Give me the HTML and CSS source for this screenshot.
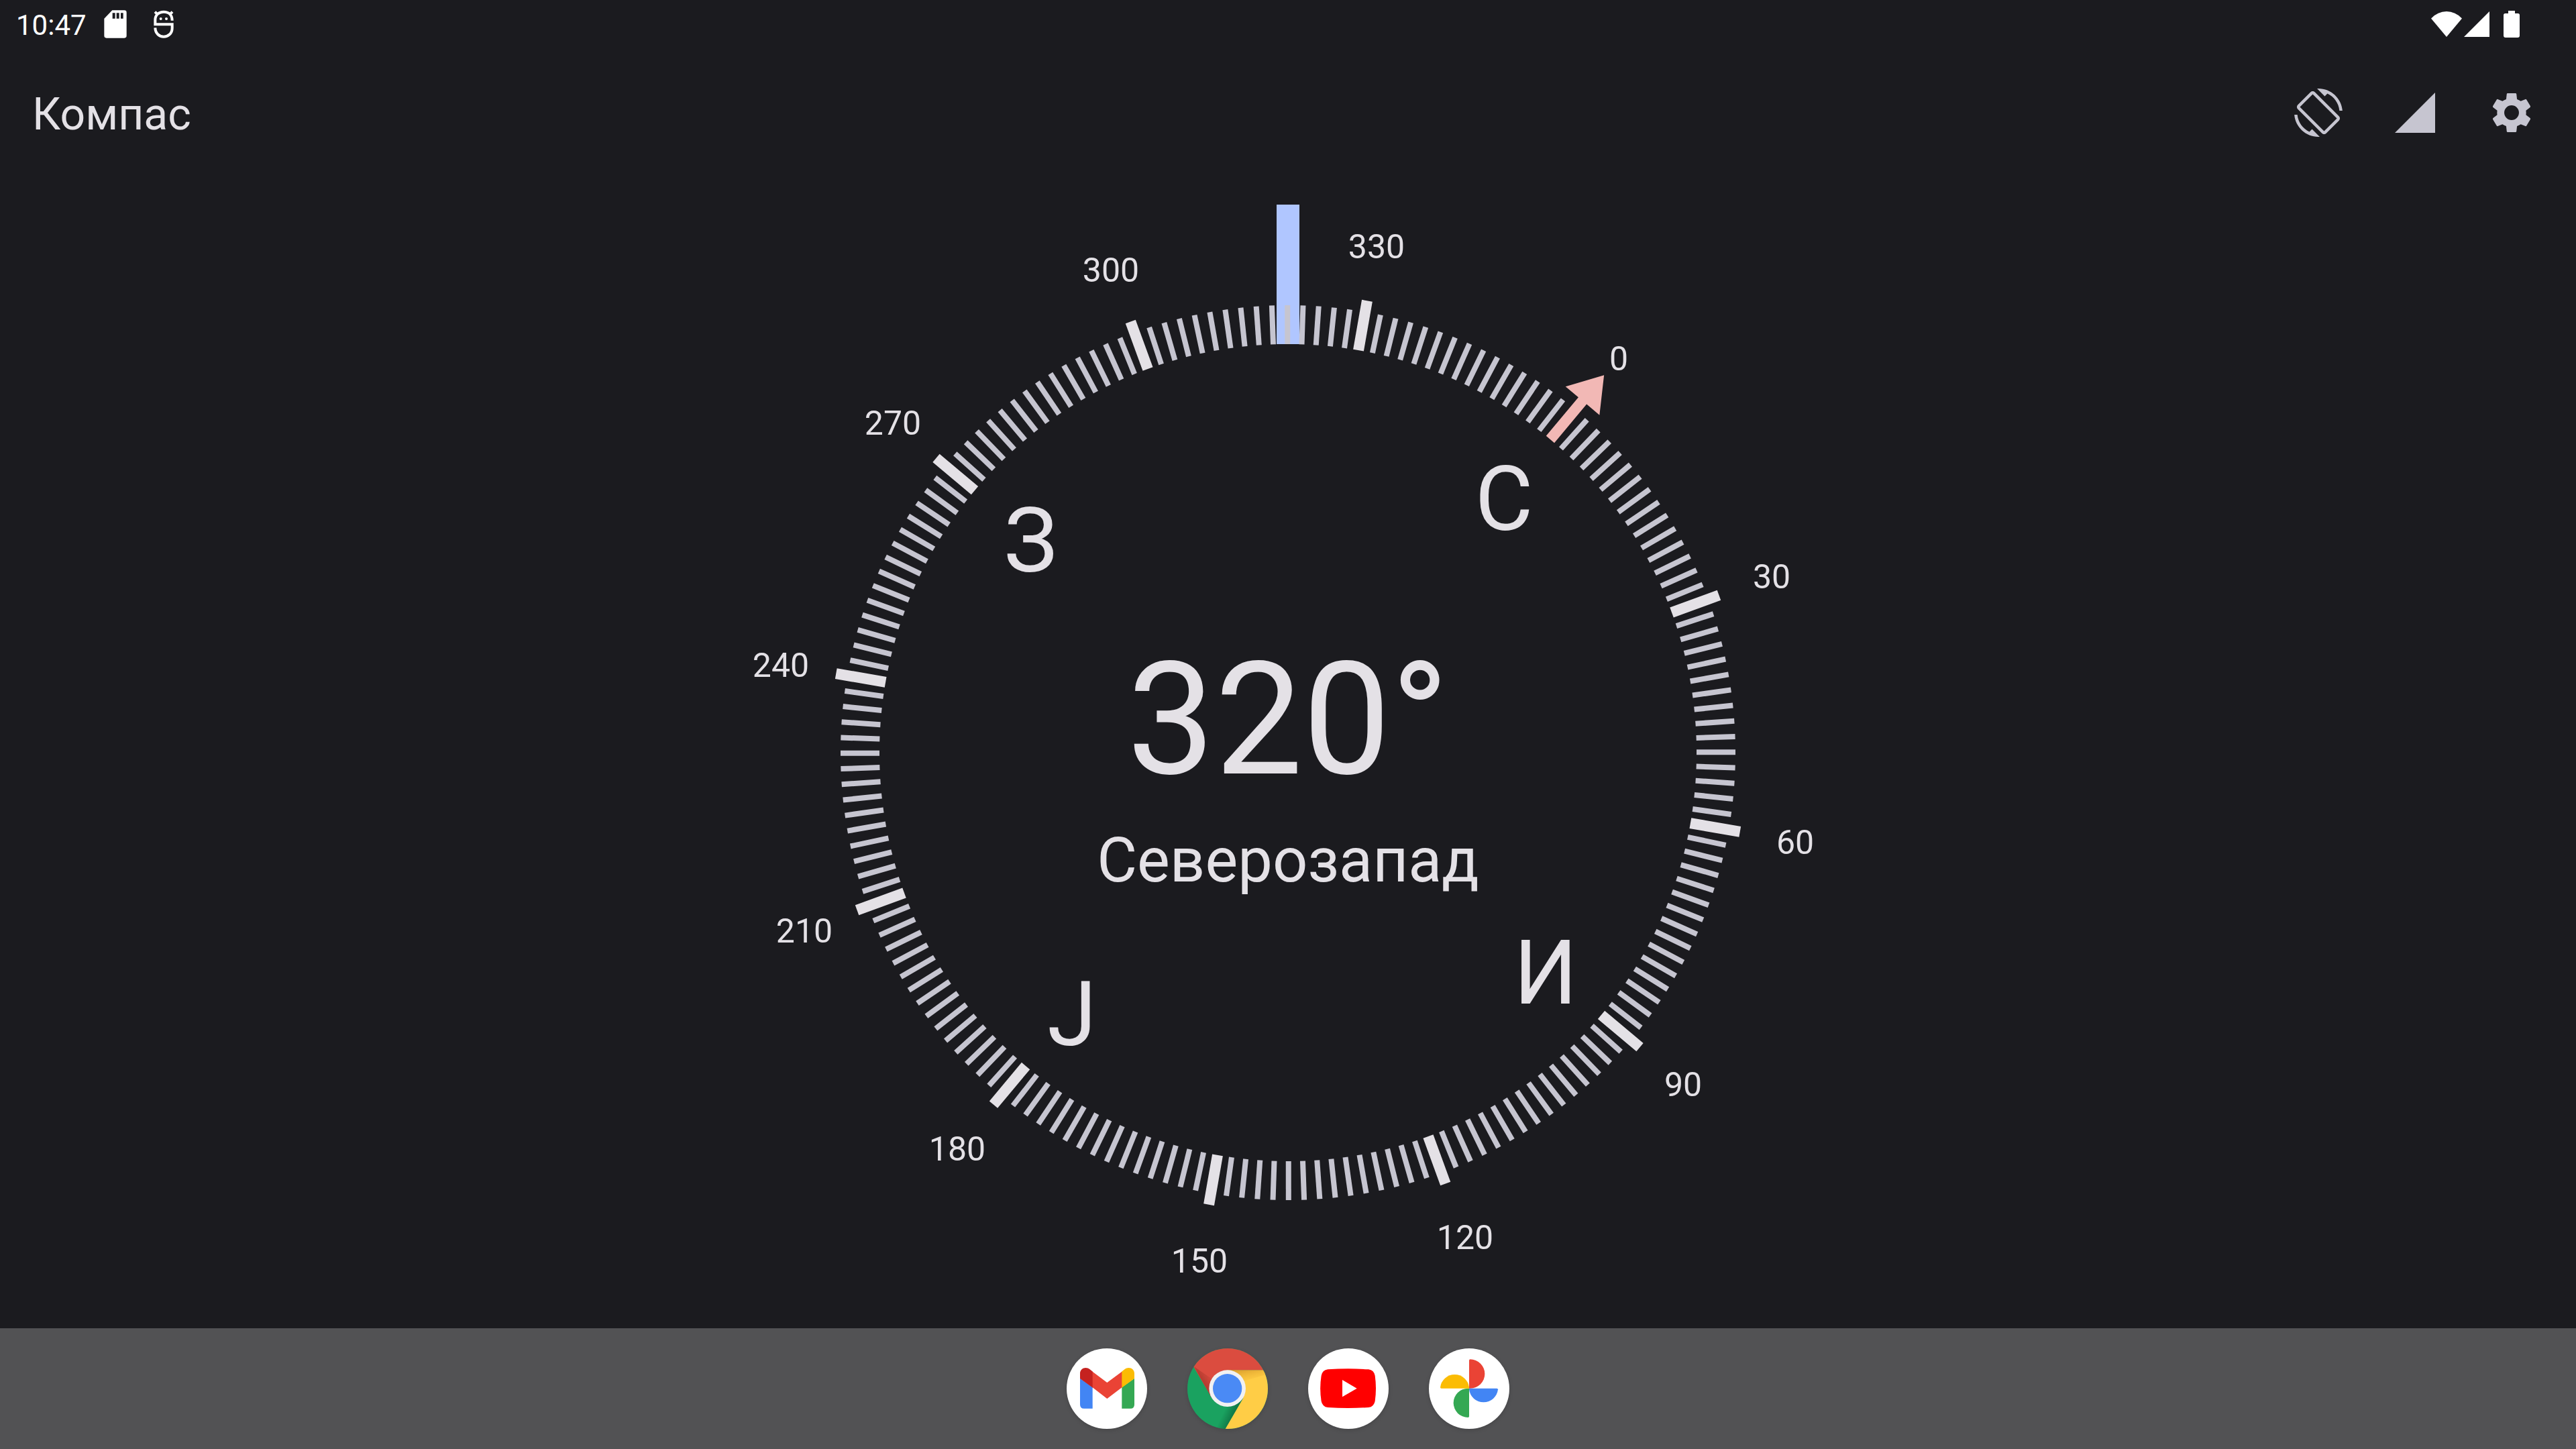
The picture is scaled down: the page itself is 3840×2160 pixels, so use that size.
FILE: index.html
```html
<!DOCTYPE html>
<html lang="sr">
<head>
<meta charset="utf-8">
<meta name="viewport" content="width=device-width, initial-scale=1">
<title>Компас</title>
<link rel="stylesheet" href="styles.css">
</head>
<body>
<div class="screen">
  <div class="status-bar">
    <div class="status-left">
      <time class="clock">10:47</time>
      <div class="notifications">
        <svg class="icon-sd" viewBox="46 27 102 126" aria-hidden="true">
          <path fill="currentColor" fill-rule="evenodd" d="M83 28H137Q147 28 147 38V142Q147 152 137 152H57Q47 152 47 142V65ZM84 40V65H96V40ZM102 40V65H114V40ZM121 40V65H132V40Z"/>
        </svg>
        <svg class="icon-debug" viewBox="267 27 90 126" aria-hidden="true">
          <g fill="none" stroke="currentColor" stroke-width="12">
            <path d="M350 74C350 46 333 35 312 35S274 48 274 72V91H350V108C350 132 332 146 312 146S275 132 274 106"/>
            <path d="M273 35L284 46M351 35L340 46"/>
          </g>
          <g fill="currentColor"><circle cx="299" cy="66" r="6"/><circle cx="324" cy="66" r="6"/></g>
        </svg>
      </div>
    </div>
    <div class="status-right">
      <div class="radios">
        <svg class="icon-wifi" viewBox="0 0 46 38" aria-hidden="true"><path fill="currentColor" d="M23 38L0 10.500Q10 0 23 0T46 10.500Z"/></svg>
        <svg class="icon-cell" viewBox="0 0 38 38" aria-hidden="true"><path fill="currentColor" d="M0 38L38 0V38Z"/></svg>
      </div>
      <svg class="icon-battery" viewBox="0 0 24 40" aria-hidden="true"><path fill="currentColor" d="M7 0H17V4H21.500Q24 4 24 6.500V37Q24 40 21 40H3Q0 40 0 37V6.500Q0 4 2.500 4H7Z"/></svg>
    </div>
  </div>

  <header class="app-bar">
    <h1 class="title">Компас</h1>
    <div class="actions">
      <button class="action" type="button" aria-label="Ротација екрана">
        <svg viewBox="0 0 24 24" aria-hidden="true"><path fill="currentColor" d="M16.480 2.520c3.270 1.550 5.610 4.720 5.970 8.480h1.500C23.440 4.840 18.290 0 12 0l-.66.03 3.810 3.810 1.330-1.320zm-6.250-.77c-.59-.59-1.540-.59-2.120 0L1.750 8.110c-.59.59-.59 1.540 0 2.120l12.020 12.020c.59.59 1.540.59 2.120 0l6.360-6.360c.59-.59.59-1.540 0-2.120L10.230 1.750zm4.600 19.440L2.810 9.170l6.360-6.360 12.020 12.020-6.360 6.360zm-7.310.29C4.250 19.940 1.910 16.760 1.550 13H.05C.56 19.160 5.710 24 12 24l.66-.03-3.810-3.810-1.330 1.320z"/></svg>
      </button>
      <button class="action" type="button" aria-label="Тачност сензора">
        <svg viewBox="0 0 24 24" aria-hidden="true"><path fill="currentColor" d="M2 22h20V2z"/></svg>
      </button>
      <button class="action" type="button" aria-label="Подешавања">
        <svg viewBox="0 0 24 24" aria-hidden="true"><path fill="currentColor" fill-rule="evenodd" d="M10.030 2.330H13.970Q14.350 2.330 14.400 2.700L14.700 5.300Q15.700 5.700 16.550 6.250L18.850 5.300Q19.200 5.200 19.400 5.500L21.300 8.700Q21.450 9.050 21.200 9.300L19.150 10.900Q19.300 12 19.150 13.100L21.200 14.700Q21.450 14.950 21.300 15.300L19.400 18.500Q19.200 18.800 18.850 18.700L16.550 17.750Q15.700 18.300 14.700 18.700L14.400 21.300Q14.350 21.670 13.970 21.670H10.030Q9.650 21.670 9.600 21.300L9.300 18.700Q8.300 18.300 7.450 17.750L5.150 18.700Q4.800 18.800 4.600 18.500L2.700 15.300Q2.550 14.950 2.800 14.700L4.850 13.100Q4.700 12 4.850 10.900L2.800 9.300Q2.550 9.050 2.700 8.700L4.600 5.500Q4.800 5.200 5.150 5.300L7.450 6.250Q8.300 5.700 9.300 5.300L9.600 2.700Q9.650 2.330 10.030 2.330ZM12 8.350A3.650 3.650 0 1 0 12 15.650A3.650 3.650 0 1 0 12 8.350Z"/></svg>
      </button>
    </div>
  </header>

  <main class="compass">
    <svg class="dial" viewBox="-858 -858 1716 1716" role="img" aria-label="320° Северозапад" data-rotation="39.93">
      <rect class="pointer" x="-17" y="-817" width="34" height="208"/>
      <g class="ticks"></g>
      <g class="degrees"></g>
      <g class="cardinals"></g>
      <text class="heading" x="0" y="31">320°</text>
      <text class="direction" x="0" y="192">Северозапад</text>
    </svg>
  </main>

  <nav class="taskbar" aria-label="Апликације">
    <a class="app" href="#gmail" aria-label="Gmail">
      <svg viewBox="0 0 360 360" aria-hidden="true">
        <circle cx="180" cy="180" r="180" fill="#fff"/>
        <path fill="#4285f4" d="M60 134L116 174V269H78Q60 269 60 251Z"/>
        <path fill="#34a853" d="M303 134L247 174V269H285Q303 269 303 251Z"/>
        <path fill="#c5221f" d="M60 135V113C60 89 86 80 104 94L117 104V176Z"/>
        <path fill="#fbbc04" d="M303 135V113C303 89 277 80 259 94L246 104V176Z"/>
        <path fill="#ea4335" d="M116 104L181 153L247 104V175L181 225L116 175Z"/>
      </svg>
    </a>
    <a class="app" href="#chrome" aria-label="Chrome">
      <svg viewBox="0 0 360 360" aria-hidden="true">
        <defs>
          <clipPath id="chrome-disc"><circle cx="180" cy="180" r="180"/></clipPath>
          <linearGradient id="red-shade" gradientUnits="userSpaceOnUse" x1="62" y1="148" x2="108" y2="118"><stop offset="0" stop-color="#8f2a20" stop-opacity=".55"/><stop offset="1" stop-color="#8f2a20" stop-opacity="0"/></linearGradient>
          <linearGradient id="yellow-shade" gradientUnits="userSpaceOnUse" x1="250" y1="97" x2="264" y2="160"><stop offset="0" stop-color="#b06a10" stop-opacity=".4"/><stop offset="1" stop-color="#e8a020" stop-opacity="0"/></linearGradient>
          <linearGradient id="green-shade" gradientUnits="userSpaceOnUse" x1="210" y1="292" x2="168" y2="272"><stop offset="0" stop-color="#0a5a34" stop-opacity=".6"/><stop offset="1" stop-color="#0a5a34" stop-opacity="0"/></linearGradient>
        </defs>
        <g clip-path="url(#chrome-disc)">
          <path fill="#1aa260" d="M0 0H360V360H0Z"/>
          <path fill="url(#green-shade)" d="M108 220L248 225L170 360H120Z"/>
          <path fill="#ffcd46" d="M180 97H360V360H170L250 222Z"/>
          <path fill="url(#yellow-shade)" d="M180 97H345L350 118L240 150Z"/>
          <path fill="#db4c3f" d="M-20 0H360V97H180L108 220Z"/>
          <path fill="url(#red-shade)" d="M30 82L108 220L130 150Z"/>
        </g>
        <circle cx="179" cy="179" r="82" fill="#f1f1f1"/>
        <circle cx="179" cy="179" r="65" fill="#4a8af5"/>
      </svg>
    </a>
    <a class="app" href="#youtube" aria-label="YouTube">
      <svg viewBox="0 0 360 360" aria-hidden="true">
        <circle cx="180" cy="180" r="180" fill="#fff"/>
        <path fill="#f00" d="M88 94Q179 88 270 94Q294 97 299 122Q307 179 299 236Q294 261 270 264Q179 270 88 264Q64 261 59 236Q50 179 59 122Q64 97 88 94Z"/>
        <path fill="#fff" d="M153 141L218 179L153 217Z"/>
      </svg>
    </a>
    <a class="app" href="#photos" aria-label="Google Photos">
      <svg viewBox="0 0 360 360" aria-hidden="true">
        <circle cx="180" cy="180" r="180" fill="#fff"/>
        <path fill="#ea4335" d="M180 54a5 5 0 0 1 5-5a65 65 0 0 1 0 130h-5z"/>
        <path fill="#4285f4" d="M180 179H304a5 5 0 0 1 5 5a65 65 0 0 1-129 0z"/>
        <path fill="#34a853" d="M180 179V304a5 5 0 0 1-5 5a65 65 0 0 1 0-130z"/>
        <path fill="#fbbc04" d="M180 179H56a5 5 0 0 1-5-5a65 65 0 0 1 129 0z"/>
      </svg>
    </a>
  </nav>
</div>
<script src="dial.js"></script>
</body>
</html>
```
FILE: styles.css
```css
:root {
  --surface: #1b1b1f;
  --on-surface: #e4e1e6;
  --muted: #c6c5d0;
  --primary: #b0c6ff;
  --north: #f2b8b5;
  --taskbar: #525254;
}

* {
  box-sizing: border-box;
}

body {
  margin: 0;
  background: var(--surface);
  color: var(--on-surface);
  font-family: Roboto, "Noto Sans", sans-serif;
}

svg {
  display: block;
}

.screen {
  display: flex;
  flex-direction: column;
  height: 100vh;
}

.status-bar {
  display: flex;
  align-items: center;
  justify-content: space-between;
  height: 72px;
  padding: 0 84px 0 24px;
  color: #fff;
}

.status-left,
.notifications,
.status-right,
.radios {
  display: flex;
  align-items: center;
}

.status-left {
  gap: 26px;
}

.notifications {
  gap: 40px;
}

.status-right {
  gap: 21px;
}

.radios {
  gap: 3px;
}

.clock {
  padding-top: 3px;
  font-size: 42px;
  line-height: 48px;
}

.icon-sd {
  width: 34px;
  height: 42px;
}

.icon-debug {
  width: 30px;
  height: 42px;
}

.icon-wifi {
  width: 46px;
  height: 38px;
}

.icon-cell {
  width: 38px;
  height: 38px;
}

.icon-battery {
  width: 24px;
  height: 40px;
}

.app-bar {
  display: flex;
  align-items: center;
  justify-content: space-between;
  height: 192px;
  padding: 0 60px 0 48px;
}

.title {
  margin: 0;
  padding-top: 6px;
  font-size: 66px;
  font-weight: 400;
  line-height: 80px;
}

.actions {
  display: flex;
  gap: 72px;
}

.action {
  width: 72px;
  height: 72px;
  padding: 0;
  border: 0;
  background: none;
  color: var(--muted);
}

.compass {
  flex: 1;
  min-height: 0;
}

.dial {
  width: 100%;
  height: 100%;
}

.pointer {
  fill: var(--primary);
}

.tick-minor {
  fill: var(--muted);
}

.tick-major {
  fill: var(--on-surface);
}

.north {
  fill: var(--north);
}

.dial text {
  fill: var(--on-surface);
  text-anchor: middle;
}

.degrees {
  font-size: 50px;
}

.cardinals {
  font-size: 133px;
}

.heading {
  font-size: 233px;
}

.direction {
  font-size: 92px;
}

.taskbar {
  display: flex;
  align-items: center;
  justify-content: center;
  gap: 60px;
  height: 180px;
  background: var(--taskbar);
}

.app {
  width: 120px;
  height: 120px;
  border-radius: 50%;
  box-shadow: 0 2px 6px rgba(0, 0, 0, 0.15);
}
```
FILE: dial.js
```js
const SVG_NS = "http://www.w3.org/2000/svg";
const dial = document.querySelector(".dial");
const rotation = Number(dial.dataset.rotation);

function add(parent, name, attributes, text) {
  const node = document.createElementNS(SVG_NS, name);
  for (const key in attributes) node.setAttribute(key, attributes[key]);
  if (text) node.textContent = text;
  dial.querySelector(parent).append(node);
}

// Text stays upright; only its anchor point turns with the dial.
function addLabel(parent, text, degree, radius, baseline) {
  const angle = (degree + rotation) * Math.PI / 180;
  add(parent, "text", {
    x: Math.round(radius * Math.sin(angle)),
    y: Math.round(baseline - radius * Math.cos(angle))
  }, text);
}

for (let degree = 2; degree < 360; degree += 2) {
  const major = degree % 30 === 0;
  add(".ticks", "rect", {
    class: major ? "tick-major" : "tick-minor",
    x: major ? -8 : -4,
    y: major ? -684 : -667,
    width: major ? 16 : 8,
    height: major ? 75 : 58,
    transform: `rotate(${degree + rotation})`
  });
}

add(".ticks", "path", {
  class: "north",
  d: "M-8 -609V-684H-33L0 -734L33 -684H8V-609Z",
  transform: `rotate(${rotation})`
});

for (let degree = 0; degree < 360; degree += 30) {
  addLabel(".degrees", String(degree), degree, 768, 19);
}

["С", "И", "Ј", "З"].forEach((letter, index) => {
  addLabel(".cardinals", letter, index * 90, 501, 52);
});
```
